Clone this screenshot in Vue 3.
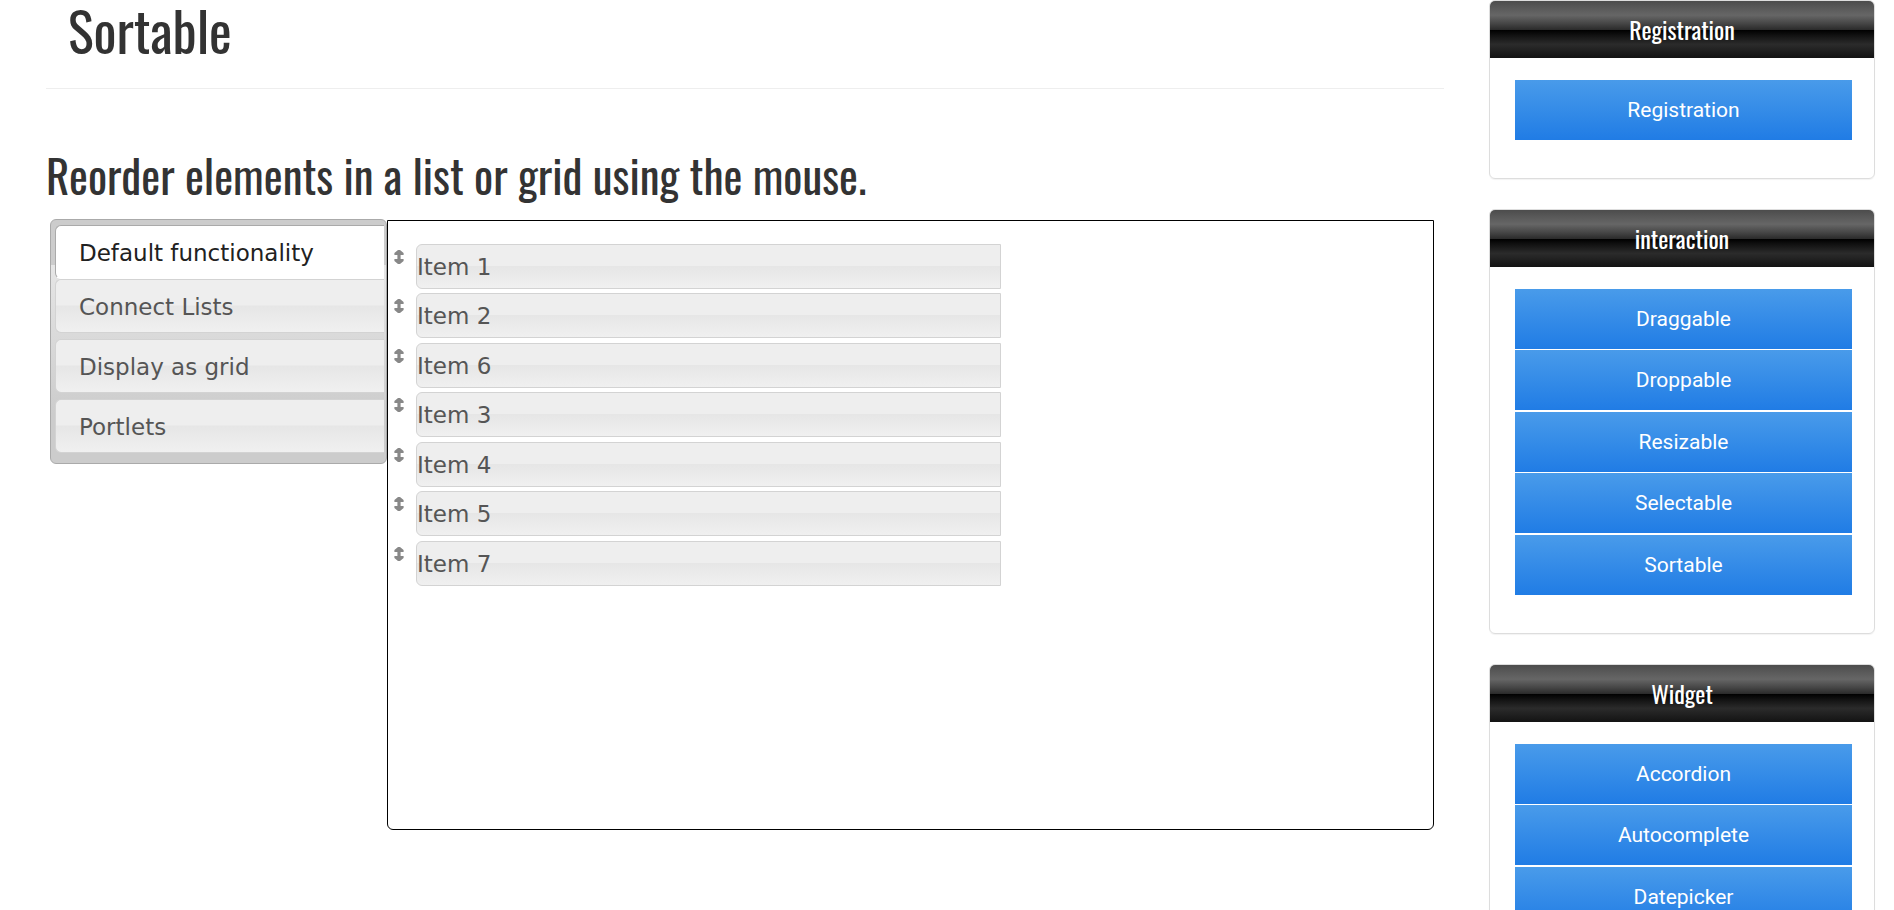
<script setup>
import { ref } from 'vue'

const tabs = ['Default functionality', 'Connect Lists', 'Display as grid', 'Portlets']
const active = ref(0)
const items = [1, 2, 6, 3, 4, 5, 7]
const panels = [
  { title: 'Registration', links: ['Registration'] },
  { title: 'interaction', links: ['Draggable', 'Droppable', 'Resizable', 'Selectable', 'Sortable'] },
  { title: 'Widget', links: ['Accordion', 'Autocomplete', 'Datepicker'] },
]
</script>

<template>
  <div class="page">
    <main class="main">
      <h1 class="title">Sortable</h1>
      <h2 class="subtitle">Reorder elements in a list or grid using the mouse.</h2>
      <div class="demo">
        <div class="tabs" role="tablist">
          <button
            v-for="(tab, i) in tabs"
            :key="tab"
            class="tab"
            :class="{ active: i === active }"
            type="button"
            role="tab"
            :aria-selected="i === active"
            @click="active = i"
          >{{ tab }}</button>
        </div>
        <section class="content">
          <ul class="items">
            <li v-for="n in items" :key="n" class="row">
              <svg class="handle" viewBox="0 0 10 14" aria-hidden="true">
                <path d="M4 0 H6 L9.6 3 V5 H6.6 V9 H9.6 V11 L6 14 H4 L0.4 11 V9 H3.4 V5 H0.4 V3 Z" />
              </svg>
              <span class="item">Item {{ n }}</span>
            </li>
          </ul>
        </section>
      </div>
    </main>
    <aside class="side">
      <section v-for="p in panels" :key="p.title" class="panel">
        <h3 class="panel-title">{{ p.title }}</h3>
        <ul class="links">
          <li v-for="l in p.links" :key="l"><a href="#">{{ l }}</a></li>
        </ul>
      </section>
    </aside>
  </div>
</template>

<style>
body {
  margin: 0;
  background: #fff;
}
html,
body {
  height: 100%;
  overflow: hidden;
}
</style>

<style scoped>
.page {
  box-sizing: border-box;
  display: flex;
  gap: 45px;
  padding: 0 19px 0 46px;
  color: #333;
  font-family: Verdana, "DejaVu Sans", sans-serif;
}
h1, h2, h3, ul {
  margin: 0;
  padding: 0;
  font-weight: 400;
  list-style: none;
}
.main {
  flex: 1;
  min-width: 0;
}
.title, .subtitle, .panel-title {
  font-family: Oswald, "Liberation Sans Narrow", "Arial Narrow", sans-serif;
}
.title {
  padding: 0 22px 28px;
  border-bottom: 1px solid #eee;
  font-size: 54px;
  line-height: 60px;
}
.subtitle {
  margin: 56px 0 14px;
  font-size: 45px;
  line-height: 60px;
}
.demo {
  display: flex;
  align-items: flex-start;
  padding: 0 10px 0 4px;
}
.tabs {
  box-sizing: border-box;
  width: 337px;
  display: flex;
  flex-direction: column;
  gap: 6px;
  padding: 5px 2px 10px 4px;
  border: 1px solid #aaa;
  border-radius: 6px;
  background: linear-gradient(#ccc 45px, #e6e6e6 45px, #ccc 195px);
}
.tab {
  box-sizing: border-box;
  height: 54px;
  padding: 2px 0 0 23px;
  border: 1px solid #d3d3d3;
  border-right: 0;
  border-radius: 6px 0 0 6px;
  background: linear-gradient(#eee 48%, #e6e6e6 50%, #f0f0f0);
  color: #555;
  font-family: Verdana, "DejaVu Sans", sans-serif;
  font-size: 23px;
  text-align: left;
}
.tab.active {
  margin-bottom: -6px;
  border-color: #aaa;
  border-bottom-color: #fff;
  background: #fff;
  color: #212121;
}
.content {
  box-sizing: border-box;
  flex: 1;
  min-height: 610px;
  margin-top: 1px;
  padding: 23px 6px;
  border: 1px solid #000;
  border-radius: 0 0 6px 6px;
}
.row {
  display: flex;
  gap: 12px;
  margin-bottom: 4px;
}
.row:nth-child(even) {
  margin-bottom: 5px;
}
.handle {
  width: 10px;
  height: 14px;
  margin-top: 6px;
  fill: #888;
}
.item {
  box-sizing: border-box;
  width: 585px;
  height: 45px;
  border: 1px solid #d3d3d3;
  border-radius: 6px 0 0 6px;
  background: linear-gradient(#eee 48%, #e6e6e6 50%, #f0f0f0);
  color: #555;
  font-size: 23px;
  line-height: 45px;
}
.side {
  width: 386px;
  flex: none;
}
.panel {
  box-sizing: border-box;
  margin-bottom: 30px;
  border: 1px solid #ddd;
  border-radius: 6px;
  box-shadow: 0 1px 1px rgba(0, 0, 0, 0.05);
}
.panel-title {
  border-radius: 5px 5px 0 0;
  background: linear-gradient(#4c4c4c 0%, #595959 12%, #666 25%, #474747 39%, #2c2c2c 50%, #000 51%, #111 60%, #2b2b2b 76%, #1c1c1c 91%, #131313 100%);
  color: #fff;
  font-size: 24px;
  line-height: 57px;
  text-align: center;
}
.links {
  padding: 22px 22px 38px 25px;
}
.links li + li {
  margin-top: 1px;
}
.links li:nth-child(2n + 3) {
  margin-top: 2px;
}
.links a {
  display: block;
  background: linear-gradient(#499bea, #207ce5);
  color: #fff;
  font-family: Roboto, sans-serif;
  font-size: 21px;
  line-height: 60px;
  text-align: center;
  text-decoration: none;
}
</style>
